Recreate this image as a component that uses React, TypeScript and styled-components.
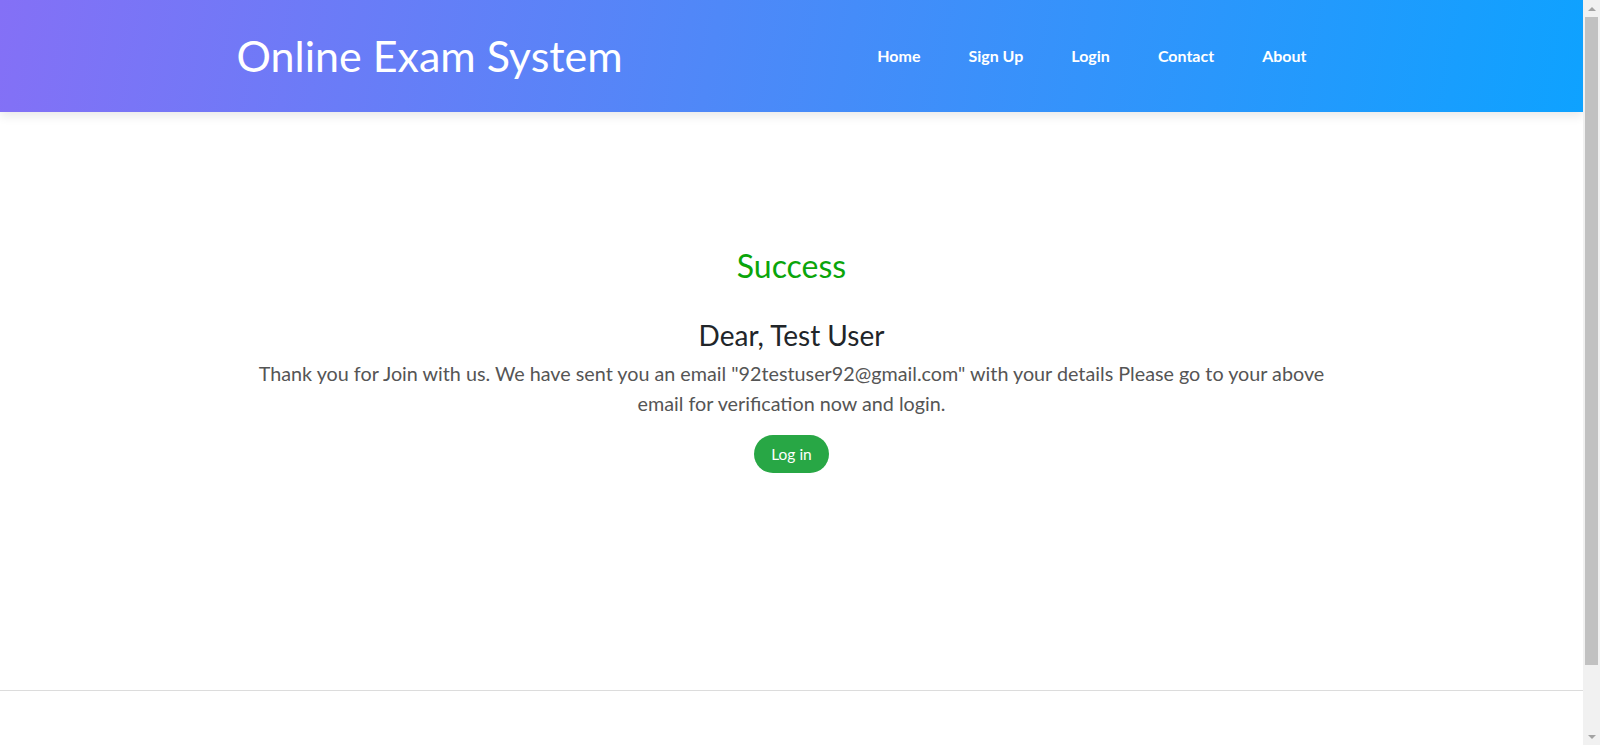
import React from "react";
import styled, { createGlobalStyle } from "styled-components";

const GlobalStyle = createGlobalStyle`
  html, body { margin: 0; padding: 0; }
  body {
    font-family: Lato, "Open Sans", "Liberation Sans", sans-serif;
    background: #fff;
    color: #212529;
    padding-right: 17px;
  }
  * { box-sizing: border-box; }
`;

const Header = styled.header`
  height: 112px;
  background: linear-gradient(100deg, #8470f6 0%, #4f88f8 45%, #0ea2ff 100%);
  box-shadow: 0 4px 10px rgba(0, 0, 0, 0.09);
  position: relative;
  z-index: 1;
`;

const Container = styled.div`
  max-width: 1140px;
  margin: 0 auto;
  padding: 0 15px;
`;

const HeaderInner = styled(Container)`
  height: 100%;
  display: flex;
  align-items: center;
  justify-content: space-between;
`;

const Brand = styled.a`
  font-size: 43px;
  font-weight: 400;
  color: #fff;
  text-decoration: none;
  margin-top: -1px;
`;

const Nav = styled.nav`
  display: flex;
  align-items: center;
  margin-right: 16px;
  margin-top: -2px;
`;

const NavLink = styled.a`
  color: #fff;
  font-size: 16px;
  font-weight: 700;
  text-decoration: none;
  padding: 0 24px;
`;

const Main = styled.main`
  height: 578px;
  display: flex;
  flex-direction: column;
  align-items: center;
  padding-top: 134px;
  text-align: center;
`;

const Status = styled.h2`
  margin: 0;
  font-size: 32px;
  font-weight: 400;
  color: #0aa50a;
  line-height: 40px;
`;

const Greeting = styled.h3`
  margin: 31px 0 0;
  font-size: 28px;
  font-weight: 400;
  color: #212529;
  line-height: 36px;
`;

const Message = styled.p`
  margin: 6px 0 0;
  max-width: 1080px;
  font-size: 19.75px;
  line-height: 30px;
  color: #555;
`;

const PillButton = styled.a`
  margin-top: 16px;
  display: inline-flex;
  align-items: center;
  justify-content: center;
  height: 38px;
  padding: 0 17px;
  border-radius: 19px;
  background: #28a745;
  color: #fff;
  font-size: 15.5px;
  text-decoration: none;
`;

const Footer = styled.footer`
  border-top: 1px solid #dcdcdc;
  height: 130px;
`;

/* Imitation of the browser's classic scrollbar, shown over the page edge */
const ScrollTrack = styled.div`
  position: fixed;
  top: 0;
  right: 0;
  width: 17px;
  height: 100vh;
  background: #f1f1f1;
  display: flex;
  flex-direction: column;
  align-items: center;
  z-index: 10;
`;

const ScrollArrow = styled.div<{ $down?: boolean }>`
  width: 17px;
  height: 17px;
  display: flex;
  align-items: center;
  justify-content: center;
  flex: none;
  &::before {
    content: "";
    border-left: 4px solid transparent;
    border-right: 4px solid transparent;
    ${(p) => (p.$down ? "border-top: 4px solid #a3a3a3;" : "border-bottom: 4px solid #a3a3a3;")}
  }
`;

const ScrollThumb = styled.div`
  width: 13px;
  height: 648px;
  background: #c1c1c1;
  flex: none;
`;

const ScrollSpacer = styled.div`
  flex: 1;
`;

export default function App() {
  return (
    <>
      <GlobalStyle />
      <Header>
        <HeaderInner>
          <Brand href="#">Online Exam System</Brand>
          <Nav>
            <NavLink href="#">Home</NavLink>
            <NavLink href="#">Sign Up</NavLink>
            <NavLink href="#">Login</NavLink>
            <NavLink href="#">Contact</NavLink>
            <NavLink href="#">About</NavLink>
          </Nav>
        </HeaderInner>
      </Header>
      <Main>
        <Status>Success</Status>
        <Greeting>Dear, Test User</Greeting>
        <Message>
          Thank you for Join with us. We have sent you an email "92testuser92@gmail.com" with your details Please go to your above email for verification now and login.
        </Message>
        <PillButton href="#">Log in</PillButton>
      </Main>
      <Footer />
      <ScrollTrack aria-hidden="true">
        <ScrollArrow />
        <ScrollThumb />
        <ScrollSpacer />
        <ScrollArrow $down />
      </ScrollTrack>
    </>
  );
}
